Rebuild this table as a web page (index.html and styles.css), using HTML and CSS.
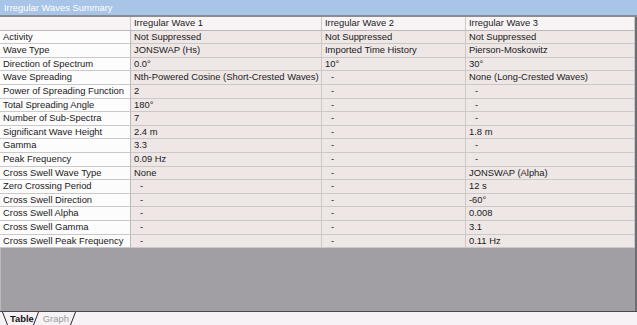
FILE: index.html
```html
<!DOCTYPE html>
<html lang="en">
<head>
    <meta charset="UTF-8">
    <title>Irregular Waves Summary</title>
    <link rel="stylesheet" href="styles.css">
</head>
<body>
    <div class="window">
        <div class="titlebar">Irregular Waves Summary</div>
        <div class="sheet">
            <div class="grid">
                <div class="cell corner"></div>
                <div class="cell head">Irregular Wave 1</div>
                <div class="cell head">Irregular Wave 2</div>
                <div class="cell head">Irregular Wave 3</div>

                <div class="cell label">Activity</div>
                <div class="cell">Not Suppressed</div>
                <div class="cell">Not Suppressed</div>
                <div class="cell">Not Suppressed</div>

                <div class="cell label">Wave Type</div>
                <div class="cell">JONSWAP (Hs)</div>
                <div class="cell">Imported Time History</div>
                <div class="cell">Pierson-Moskowitz</div>

                <div class="cell label">Direction of Spectrum</div>
                <div class="cell">0.0°</div>
                <div class="cell">10°</div>
                <div class="cell">30°</div>

                <div class="cell label">Wave Spreading</div>
                <div class="cell">Nth-Powered Cosine (Short-Crested Waves)</div>
                <div class="cell dash">-</div>
                <div class="cell">None (Long-Crested Waves)</div>

                <div class="cell label">Power of Spreading Function</div>
                <div class="cell">2</div>
                <div class="cell dash">-</div>
                <div class="cell dash">-</div>

                <div class="cell label">Total Spreading Angle</div>
                <div class="cell">180°</div>
                <div class="cell dash">-</div>
                <div class="cell dash">-</div>

                <div class="cell label">Number of Sub-Spectra</div>
                <div class="cell">7</div>
                <div class="cell dash">-</div>
                <div class="cell dash">-</div>

                <div class="cell label">Significant Wave Height</div>
                <div class="cell">2.4 m</div>
                <div class="cell dash">-</div>
                <div class="cell">1.8 m</div>

                <div class="cell label">Gamma</div>
                <div class="cell">3.3</div>
                <div class="cell dash">-</div>
                <div class="cell dash">-</div>

                <div class="cell label">Peak Frequency</div>
                <div class="cell">0.09 Hz</div>
                <div class="cell dash">-</div>
                <div class="cell dash">-</div>

                <div class="cell label">Cross Swell Wave Type</div>
                <div class="cell">None</div>
                <div class="cell dash">-</div>
                <div class="cell">JONSWAP (Alpha)</div>

                <div class="cell label">Zero Crossing Period</div>
                <div class="cell dash">-</div>
                <div class="cell dash">-</div>
                <div class="cell">12 s</div>

                <div class="cell label">Cross Swell Direction</div>
                <div class="cell dash">-</div>
                <div class="cell dash">-</div>
                <div class="cell">-60°</div>

                <div class="cell label">Cross Swell Alpha</div>
                <div class="cell dash">-</div>
                <div class="cell dash">-</div>
                <div class="cell">0.008</div>

                <div class="cell label">Cross Swell Gamma</div>
                <div class="cell dash">-</div>
                <div class="cell dash">-</div>
                <div class="cell">3.1</div>

                <div class="cell label">Cross Swell Peak Frequency</div>
                <div class="cell dash">-</div>
                <div class="cell dash">-</div>
                <div class="cell">0.11 Hz</div>
            </div>
            <div class="empty"></div>
        </div>
        <div class="tabs">
            <!-- slanted edges of the sheet tabs -->
            <svg class="tab-edges" width="80" height="13" viewBox="0 0 80 13">
                <path d="M2.5 0 L7.5 13" stroke="#2a2a2a" fill="none"/>
                <path d="M38.5 0 L33.5 13" stroke="#2a2a2a" fill="none"/>
                <path d="M75.5 0 L70.5 13" stroke="#2a2a2a" fill="none"/>
            </svg>
            <span class="tab active">Table</span>
            <span class="tab">Graph</span>
        </div>
    </div>
</body>
</html>
```

FILE: styles.css
```css
body {
    margin: 0;
    font-family: "Liberation Sans", Arial, sans-serif;
    font-size: 9.4px;
    color: #1a1a1a;
    background: #fff;
}

.window {
    width: 637px;
    height: 325px;
    display: flex;
    flex-direction: column;
    overflow: hidden;
}

.titlebar {
    flex-shrink: 0;
    height: 15px;
    line-height: 15px;
    padding-left: 4px;
    background: #a8c4e6;
    color: #fff;
    border-bottom: 2px solid #8c8c8c;
}

.sheet {
    flex: 1;
    display: flex;
    flex-direction: column;
    border-right: 2px solid #6e6e72;
    background: #a19fa3;
}

.grid {
    flex-shrink: 0;
    display: grid;
    grid-template-columns: 131px 191px 144px 1fr;
    grid-auto-rows: 13.6px;
}

.cell {
    background: #efe6e6;
    border-right: 1px solid #cdc8c8;
    border-bottom: 1px solid #cdc8c8;
    padding-left: 3px;
    line-height: 12.6px;
    white-space: nowrap;
    overflow: hidden;
}

.cell.dash {
    padding-left: 9px;
}

.cell.head,
.corner {
    background: #f8f4f6;
    border-bottom-color: #bdb8b8;
}

.cell.label {
    background: #fdfcfc;
    border-right-color: #bdb8b8;
}

.empty {
    flex: 1;
    border-left: 1px solid #b9b8bb;
}

.tabs {
    flex-shrink: 0;
    position: relative;
    height: 13px;
    background: #f6f2f6;
    border-top: 1px solid #4a4a4a;
    display: flex;
    align-items: center;
    padding-left: 10px;
}

.tab-edges {
    position: absolute;
    left: 0;
    top: 0;
}

.tab {
    position: relative;
    line-height: 12px;
    color: #9a9a9a;
}

.tab.active {
    color: #111;
    font-weight: bold;
    margin-right: 9px;
}
```
